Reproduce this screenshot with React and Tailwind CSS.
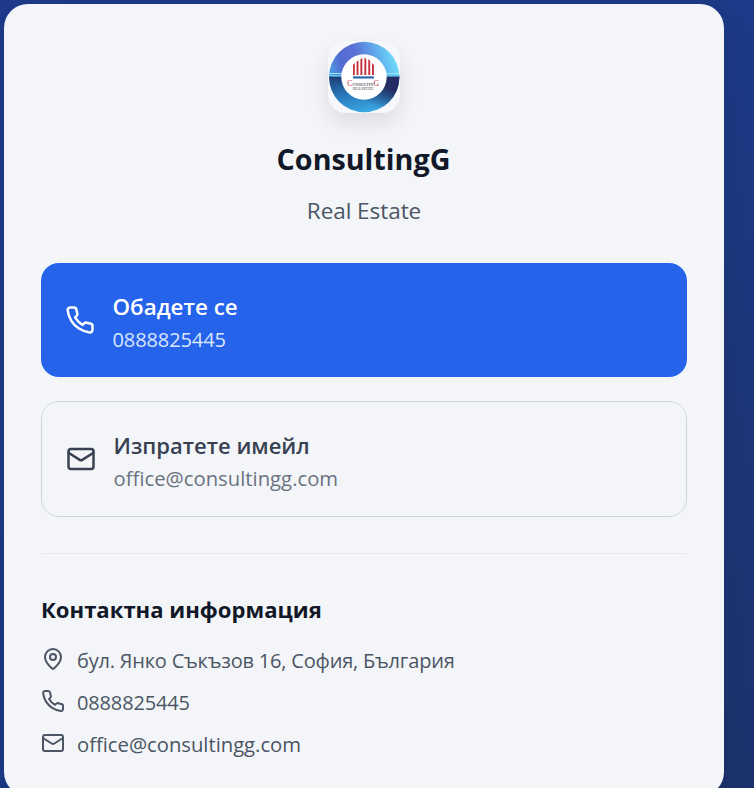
import { Mail, MapPin } from "lucide-react";

function Phone({ className, strokeWidth = 2 }) {
  return (
    <svg viewBox="0 0 24 24" fill="none" stroke="currentColor" strokeWidth={strokeWidth} strokeLinecap="round" strokeLinejoin="round" className={className}>
      <path d="M22 16.92v3a2 2 0 0 1-2.18 2 19.79 19.79 0 0 1-8.63-3.07 19.5 19.5 0 0 1-6-6 19.79 19.79 0 0 1-3.07-8.67A2 2 0 0 1 4.11 2h3a2 2 0 0 1 2 1.72 12.84 12.84 0 0 0 .7 2.81 2 2 0 0 1-.45 2.11L8.09 9.91a16 16 0 0 0 6 6l1.27-1.27a2 2 0 0 1 2.11-.45 12.84 12.84 0 0 0 2.81.7A2 2 0 0 1 22 16.92z" />
    </svg>
  );
}

function Logo() {
  return (
    <div className="h-[72px] w-[72px] overflow-hidden rounded-[18px] bg-[#f6f8fb] shadow-[0_10px_20px_rgba(15,23,42,0.10)]">
      <svg viewBox="0 0 72 72" className="h-full w-full">
        <defs>
          <linearGradient id="sky" x1="0" y1="0.9" x2="1" y2="0.75">
            <stop offset="0" stopColor="#4fa6e6" />
            <stop offset="0.22" stopColor="#536cd2" />
            <stop offset="0.45" stopColor="#5a70d4" />
            <stop offset="0.7" stopColor="#5fa4ea" />
            <stop offset="1" stopColor="#6fe0fa" />
          </linearGradient>
          <linearGradient id="sea" x1="0.1" y1="0" x2="0.45" y2="1">
            <stop offset="0" stopColor="#1b3f7a" />
            <stop offset="0.5" stopColor="#2878bb" />
            <stop offset="1" stopColor="#3aa9e2" />
          </linearGradient>
          <linearGradient id="night" x1="0" y1="0.9" x2="1" y2="0">
            <stop offset="0.4" stopColor="#232d63" stopOpacity="0" />
            <stop offset="0.75" stopColor="#232d63" />
          </linearGradient>
          <clipPath id="disc">
            <circle cx="36.2" cy="36" r="35.2" />
          </clipPath>
        </defs>
        <g clipPath="url(#disc)">
          <rect width="72" height="36" fill="url(#sky)" />
          <rect y="35" width="72" height="37" fill="url(#sea)" />
          <rect y="35" width="72" height="37" fill="url(#night)" />
          <rect y="32" width="72" height="1" fill="#9ce9fa" />
          <rect y="34" width="72" height="1.6" fill="#62c8ef" />
        </g>
        <circle cx="36" cy="36" r="22.7" fill="#fff" />
        <path fill="#c4303c" d="M25 24l1.8-2v12H25zM28.6 21l1.9-2v15h-1.9zM32.4 18.5l1.9-1.8V34h-1.9zM36.4 16.6l1.9 1.5V34h-1.9zM40.3 18l1.9 2v14h-1.9zM44 22l1.9 2v10H44z" />
        <rect x="25" y="35.4" width="21" height="2.1" fill="#2763a8" />
        <g fontFamily="Liberation Serif, serif">
          <text x="19.2" y="44.7" fontSize="7.6" fill="#c22732">C</text>
          <text x="24.4" y="44.7" fontSize="4.8" textLength="20.8" lengthAdjust="spacingAndGlyphs" fill="#29242d">ONSULTIN</text>
          <text x="45.5" y="44.7" fontSize="7.6" fill="#c22732">G</text>
          <text x="24.8" y="49.2" fontSize="3.7" textLength="20.4" lengthAdjust="spacingAndGlyphs" fill="#29242d">REAL ESTATE</text>
        </g>
      </svg>
    </div>
  );
}

function ContactRow({ icon: Icon, textClass, children }) {
  return (
    <li className="flex h-[42px] items-center gap-3">
      <Icon className="mb-1 size-6 shrink-0" strokeWidth={2} />
      <span className={textClass}>{children}</span>
    </li>
  );
}

export default function App() {
  return (
    <div className="h-[788px] w-[754px] overflow-hidden bg-linear-to-br from-[#1e3a8a] via-[#1d3a88] to-[#1c336c] pt-1 pl-1 font-['Open_Sans','Noto_Sans',sans-serif]">
      <main className="h-[792px] w-[720px] rounded-3xl bg-[#f3f5f9] px-[37px] pt-[37px] shadow-[0_10px_36px_rgba(0,0,0,0.1)]">
        <header className="flex flex-col items-center">
          <Logo />
          <h1 className="mt-[26px] mr-px text-[28.7px] leading-[40px] font-bold whitespace-nowrap text-[#111827]">ConsultingG</h1>
          <p className="mt-[14px] text-[22.5px] leading-[36px] tracking-[-0.05px] whitespace-nowrap text-[#4b5563]">Real Estate</p>
        </header>

        <a className="mt-[34px] flex h-[114px] items-center gap-[17.5px] rounded-[18px] bg-[#2563eb] px-6 text-white">
          <Phone className="size-[30px] shrink-0" />
          <span className="flex flex-col pt-1.5 whitespace-nowrap">
            <span className="text-[22.4px] leading-[33px] font-[650]">Обадете се</span>
            <span className="text-[20px] leading-[33px] tracking-[-0.1px] text-[#dbe6fd]">0888825445</span>
          </span>
        </a>

        <a className="mt-6 flex h-[116px] items-center gap-[17.5px] rounded-[18px] border border-[#d1d5db] px-6 text-[#374151]">
          <Mail className="size-[30px] shrink-0" strokeWidth={2} />
          <span className="flex flex-col pt-1.5 whitespace-nowrap">
            <span className="text-[22px] leading-[33px] font-semibold">Изпратете имейл</span>
            <span className="text-[20.3px] leading-[33px] text-[#6b7280]">office@consultingg.com</span>
          </span>
        </a>

        <section className="mt-9 border-t border-[#e5e7eb] pt-[37px]">
          <h2 className="text-[22.1px] leading-[36px] font-bold whitespace-nowrap text-[#111827]">Контактна информация</h2>
          <ul className="mt-[13px] whitespace-nowrap text-[#4b5563]">
            <ContactRow icon={MapPin} textClass="text-[20px] tracking-[-0.2px]">бул. Янко Съкъзов 16, София, България</ContactRow>
            <ContactRow icon={Phone} textClass="text-[20px] tracking-[-0.15px]">0888825445</ContactRow>
            <ContactRow icon={Mail} textClass="mb-0.5 text-[20.3px] tracking-[-0.03px]">office@consultingg.com</ContactRow>
          </ul>
        </section>
      </main>
    </div>
  );
}
